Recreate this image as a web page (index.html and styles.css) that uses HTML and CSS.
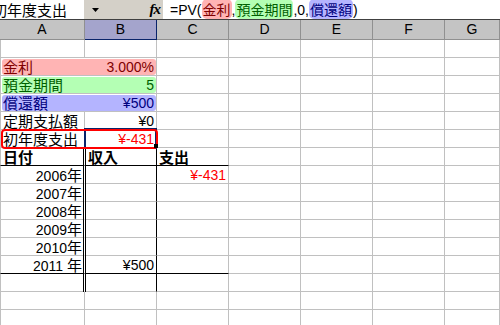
FILE: index.html
```html
<!DOCTYPE html>
<html lang="ja">
<head>
<meta charset="utf-8">
<link rel="stylesheet" href="styles.css">
</head>
<body>
<div class="fbar">
  <div class="namebox"><span class="nb-text j">初年度支出</span></div>
  <div class="tools">
    <svg class="drop" width="7" height="4" viewBox="0 0 7 4"><path d="M0 0h7L3.5 4z" fill="#000"/></svg>
    <span class="fx">fx</span>
  </div>
  <div class="formula">=PV(<span class="ref r1">金利</span>,<span class="ref r2">預金期間</span>,0,<span class="ref r3">償還額</span>)</div>
</div>
<div class="sheet">
  <div class="h">A</div><div class="h hb">B</div><div class="h">C</div><div class="h">D</div><div class="h">E</div><div class="h">F</div><div class="h">G</div>

  <div class="c a"></div><div class="c"></div><div class="c"></div><div class="c"></div><div class="c"></div><div class="c"></div><div class="c"></div>

  <div class="band"><div class="band-in p1"><span class="j">金利</span><span>3.000%</span></div></div><div class="c"></div><div class="c"></div><div class="c"></div><div class="c"></div><div class="c"></div>
  <div class="band"><div class="band-in p2"><span class="j">預金期間</span><span>5</span></div></div><div class="c"></div><div class="c"></div><div class="c"></div><div class="c"></div><div class="c"></div>
  <div class="band"><div class="band-in p3"><span class="j">償還額</span><span>¥500</span></div></div><div class="c"></div><div class="c"></div><div class="c"></div><div class="c"></div><div class="c"></div>

  <div class="c a"><span class="j">定期支払額</span></div><div class="c r">¥0</div><div class="c"></div><div class="c"></div><div class="c"></div><div class="c"></div><div class="c"></div>
  <div class="c a"><span class="j">初年度支出</span></div><div class="c r red">¥-431</div><div class="c"></div><div class="c"></div><div class="c"></div><div class="c"></div><div class="c"></div>

  <div class="c a dr bb"><span class="j b">日付</span></div><div class="c dl br bb"><span class="j b">収入</span></div><div class="c bb"><span class="j b">支出</span></div><div class="c"></div><div class="c"></div><div class="c"></div><div class="c"></div>

  <div class="c a dr r">2006<span class="j">年</span></div><div class="c dl br"></div><div class="c r red">¥-431</div><div class="c"></div><div class="c"></div><div class="c"></div><div class="c"></div>
  <div class="c a dr r">2007<span class="j">年</span></div><div class="c dl br"></div><div class="c"></div><div class="c"></div><div class="c"></div><div class="c"></div><div class="c"></div>
  <div class="c a dr r">2008<span class="j">年</span></div><div class="c dl br"></div><div class="c"></div><div class="c"></div><div class="c"></div><div class="c"></div><div class="c"></div>
  <div class="c a dr r">2009<span class="j">年</span></div><div class="c dl br"></div><div class="c"></div><div class="c"></div><div class="c"></div><div class="c"></div><div class="c"></div>
  <div class="c a dr r">2010<span class="j">年</span></div><div class="c dl br"></div><div class="c"></div><div class="c"></div><div class="c"></div><div class="c"></div><div class="c"></div>
  <div class="c a dr r bb">2011 <span class="j">年</span></div><div class="c dl br bb r">¥500</div><div class="c bb"></div><div class="c"></div><div class="c"></div><div class="c"></div><div class="c"></div>

  <div class="c a dr"></div><div class="c dl br"></div><div class="c"></div><div class="c"></div><div class="c"></div><div class="c"></div><div class="c"></div>
  <div class="c a"></div><div class="c"></div><div class="c"></div><div class="c"></div><div class="c"></div><div class="c"></div><div class="c"></div>
  <div class="c a"></div><div class="c"></div><div class="c"></div><div class="c"></div><div class="c"></div><div class="c"></div><div class="c"></div>

  <div class="sel"></div>
  <div class="mark"></div>
  <div class="handle"></div>
</div>
</body>
</html>
```
FILE: styles.css
```css
* { box-sizing: border-box; margin: 0; padding: 0; }
html, body { width: 500px; height: 325px; overflow: hidden; background: #fff; }
body {
  font-family: "Liberation Sans", "Noto Sans CJK JP", sans-serif;
  font-size: 14px;
  color: #000;
}
.j { font-family: "Noto Sans CJK JP", sans-serif; font-size: 15px; }
.b { font-weight: bold; }

.fbar {
  display: flex;
  height: 20px;
  background: #d4d0c8;
  border-bottom: 1px solid #404040;
}
.namebox {
  width: 84px;
  background: #fff;
  overflow: hidden;
  white-space: nowrap;
  line-height: 19px;
}
.nb-text { margin-left: -8px; }
.tools {
  width: 79px;
  display: flex;
  align-items: center;
  justify-content: space-between;
  padding: 0 3px 0 8px;
}
.drop { display: block; }
.fx {
  font-family: "Liberation Serif", serif;
  font-style: italic;
  font-weight: bold;
  font-size: 15px;
  letter-spacing: -1px;
  line-height: 19px;
}
.formula {
  flex: 1;
  background: #fff;
  padding-left: 7px;
  line-height: 19px;
  white-space: nowrap;
}
.ref {
  font-family: "Noto Sans CJK JP", sans-serif;
  font-size: 14px;
  border-radius: 5px;
  padding: 0 1px;
}
.r1 { background: #ffb4b4; color: #800000; }
.r2 { background: #b4ffb4; color: #006000; }
.r3 { background: #b4b4ff; color: #000080; }

.sheet {
  position: relative;
  display: grid;
  grid-template-columns: 85px repeat(5, 72px) 1fr;
  grid-template-rows: 20px;
  grid-auto-rows: 18px;
}
.h {
  background: #c4c4c4;
  border-right: 1px solid #909090;
  border-bottom: 1px solid #909090;
  text-align: center;
  line-height: 19px;
}
.hb {
  background: #a4a4cc;
  border-right-color: #0a246a;
  border-bottom-color: #0a246a;
}
.c {
  position: relative;
  border-right: 1px solid #c0c0c0;
  border-bottom: 1px solid #c0c0c0;
  padding: 1px 2px 0 2px;
  line-height: 16px;
  white-space: nowrap;
}
.a { border-left: 1px solid #c0c0c0; }
.r { text-align: right; }
.red { color: #ff0000; }
.bb { border-bottom-color: #000; }
.br { border-right-color: #000; }
.dr { border-right-color: #fff; }
.dr::after {
  content: "";
  position: absolute;
  top: 0; bottom: -1px; right: 0;
  width: 1px;
  background: #000;
}
.dl { padding-left: 3px; }
.dl::before {
  content: "";
  position: absolute;
  top: 0; bottom: -1px; left: 0;
  width: 1px;
  background: #000;
}

.band {
  grid-column: span 2;
  border-left: 1px solid #c0c0c0;
  border-right: 1px solid #c0c0c0;
  border-bottom: 1px solid #c0c0c0;
  padding: 1px 0 0 1px;
}
.band-in {
  height: 16px;
  border-radius: 3px;
  display: flex;
  justify-content: space-between;
  padding: 0 2px 0 1px;
  line-height: 16px;
  white-space: nowrap;
}
.p1 { background: #ffb4b4; color: #800000; }
.p2 { background: #b4ffb4; color: #006000; }
.p3 { background: #b4b4ff; color: #000080; }

.sel {
  position: absolute;
  left: 84px; top: 108px;
  width: 73px; height: 21px;
  border: 2px solid #0a246a;
}
.mark {
  position: absolute;
  left: 1px; top: 109px;
  width: 157px; height: 20px;
  border: 2px solid #ff0000;
  border-radius: 4px;
}
.handle {
  position: absolute;
  left: 154px; top: 124px;
  width: 4px; height: 4px;
  background: #000;
}
```
